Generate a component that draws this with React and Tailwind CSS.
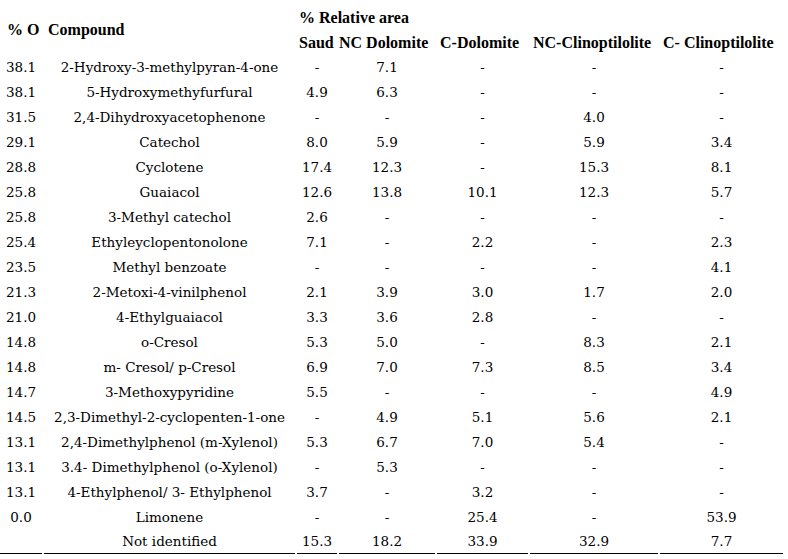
import React from "react";

const rows = [
  ["38.1", "2-Hydroxy-3-methylpyran-4-one", "-", "7.1", "-", "-", "-"],
  ["38.1", "5-Hydroxymethyfurfural", "4.9", "6.3", "-", "-", "-"],
  ["31.5", "2,4-Dihydroxyacetophenone", "-", "-", "-", "4.0", "-"],
  ["29.1", "Catechol", "8.0", "5.9", "-", "5.9", "3.4"],
  ["28.8", "Cyclotene", "17.4", "12.3", "-", "15.3", "8.1"],
  ["25.8", "Guaiacol", "12.6", "13.8", "10.1", "12.3", "5.7"],
  ["25.8", "3-Methyl catechol", "2.6", "-", "-", "-", "-"],
  ["25.4", "Ethyleyclopentonolone", "7.1", "-", "2.2", "-", "2.3"],
  ["23.5", "Methyl benzoate", "-", "-", "-", "-", "4.1"],
  ["21.3", "2-Metoxi-4-vinilphenol", "2.1", "3.9", "3.0", "1.7", "2.0"],
  ["21.0", "4-Ethylguaiacol", "3.3", "3.6", "2.8", "-", "-"],
  ["14.8", "o-Cresol", "5.3", "5.0", "-", "8.3", "2.1"],
  ["14.8", "m- Cresol/ p-Cresol", "6.9", "7.0", "7.3", "8.5", "3.4"],
  ["14.7", "3-Methoxypyridine", "5.5", "-", "-", "-", "4.9"],
  ["14.5", "2,3-Dimethyl-2-cyclopenten-1-one", "-", "4.9", "5.1", "5.6", "2.1"],
  ["13.1", "2,4-Dimethylphenol (m-Xylenol)", "5.3", "6.7", "7.0", "5.4", "-"],
  ["13.1", "3.4- Dimethylphenol (o-Xylenol)", "-", "5.3", "-", "-", "-"],
  ["13.1", "4-Ethylphenol/ 3- Ethylphenol", "3.7", "-", "3.2", "-", "-"],
  ["0.0", "Limonene", "-", "-", "25.4", "-", "53.9"],
  ["", "Not identified", "15.3", "18.2", "33.9", "32.9", "7.7"],
];

const th =
  "h-[23px] p-0 text-left font-bold text-[16px] whitespace-nowrap font-['Liberation_Serif',serif]";

export default function App() {
  return (
    <div className="w-[788px] h-[559px] bg-white overflow-hidden text-black font-['DejaVu_Serif',serif]">
      <table className="border-separate border-spacing-[2px] ml-[-2px] mt-[4px] table-fixed w-[787px] text-[13.5px] leading-none">
        <colgroup>
          <col className="w-[42px]" />
          <col className="w-[251px]" />
          <col className="w-[40px]" />
          <col className="w-[96px]" />
          <col className="w-[91px]" />
          <col className="w-[128px]" />
          <col className="w-[123px]" />
        </colgroup>
        <thead>
          <tr>
            <th rowSpan={2} className={th + " pl-[7px]"}>% O</th>
            <th rowSpan={2} className={th + " pl-[4px]"}>Compound</th>
            <th colSpan={5} className={th + " pl-[2px]"}>% Relative area</th>
          </tr>
          <tr>
            <th className={th + " pl-[2px]"}>Saud</th>
            <th className={th + " pl-0"}>NC Dolomite</th>
            <th className={th + " pl-[3px]"}>C-Dolomite</th>
            <th className={th + " pl-[3px]"}>NC-Clinoptilolite</th>
            <th className={th + " pl-[3px]"}>C- Clinoptilolite</th>
          </tr>
        </thead>
        <tbody>
          {rows.map((r, i) => {
            const last = i === rows.length - 1;
            return (
              <tr key={i}>
                {r.map((c, j) => (
                  <td
                    key={j}
                    className={
                      last
                        ? "h-[23px] p-0 text-center whitespace-nowrap border-b border-black"
                        : "h-[23px] p-0 text-center whitespace-nowrap"
                    }
                  >
                    {c}
                  </td>
                ))}
              </tr>
            );
          })}
        </tbody>
      </table>
    </div>
  );
}
